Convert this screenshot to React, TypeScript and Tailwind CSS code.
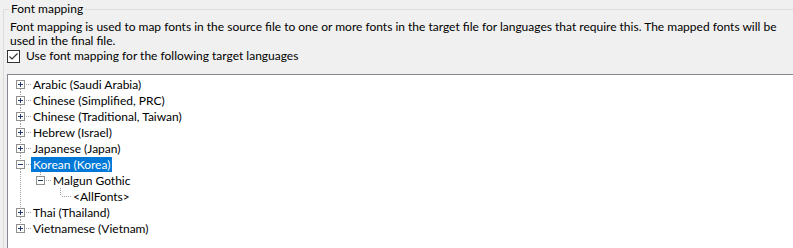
import React from 'react';

type Row = {
  label: string;
  level: number;
  expander?: 'plus' | 'minus';
  selected?: boolean;
  first?: boolean;
  hasNext: boolean; // another sibling follows at same level
  ancestors: boolean[]; // per ancestor level: does that ancestor have a later sibling
};

const rows: Row[] = [
  { label: 'Arabic (Saudi Arabia)', level: 0, expander: 'plus', first: true, hasNext: true, ancestors: [] },
  { label: 'Chinese (Simplified, PRC)', level: 0, expander: 'plus', hasNext: true, ancestors: [] },
  { label: 'Chinese (Traditional, Taiwan)', level: 0, expander: 'plus', hasNext: true, ancestors: [] },
  { label: 'Hebrew (Israel)', level: 0, expander: 'plus', hasNext: true, ancestors: [] },
  { label: 'Japanese (Japan)', level: 0, expander: 'plus', hasNext: true, ancestors: [] },
  { label: 'Korean (Korea)', level: 0, expander: 'minus', selected: true, hasNext: true, ancestors: [] },
  { label: 'Malgun Gothic', level: 1, expander: 'minus', hasNext: false, ancestors: [true] },
  { label: '<AllFonts>', level: 2, hasNext: false, ancestors: [true, false] },
  { label: 'Thai (Thailand)', level: 0, expander: 'plus', hasNext: true, ancestors: [] },
  { label: 'Vietnamese (Vietnam)', level: 0, expander: 'plus', hasNext: false, ancestors: [] },
];

const DOT = '#a0a0a0';

function Connectors({ row }: { row: Row }) {
  const w = 23 + 20 * row.level;
  const cx = 12 + 20 * row.level;
  return (
    <svg width={w} height={16} className="shrink-0" shapeRendering="crispEdges">
      {row.ancestors.map((cont, i) =>
        cont ? (
          <line key={i} x1={12 + 20 * i + 0.5} y1={0} x2={12 + 20 * i + 0.5} y2={16} stroke={DOT} strokeDasharray="1 1" />
        ) : null
      )}
      {/* up to parent */}
      {!row.first && <line x1={cx + 0.5} y1={0} x2={cx + 0.5} y2={8} stroke={DOT} strokeDasharray="1 1" />}
      {/* down to next sibling */}
      {row.hasNext && <line x1={cx + 0.5} y1={9} x2={cx + 0.5} y2={16} stroke={DOT} strokeDasharray="1 1" />}
      <line x1={cx + 2} y1={8.5} x2={cx + 11} y2={8.5} stroke={DOT} strokeDasharray="1 1" />
      {row.expander && (
        <g>
          <rect x={cx - 3.5} y={4.5} width={8} height={8} fill="#ffffff" stroke="#8f8f8f" />
          <line x1={cx - 2} y1={8.5} x2={cx + 3} y2={8.5} stroke="#1f3a6a" />
          {row.expander === 'plus' && <line x1={cx + 0.5} y1={6} x2={cx + 0.5} y2={11} stroke="#1f3a6a" />}
        </g>
      )}
    </svg>
  );
}

export default function App() {
  return (
    <div className="w-[793px] h-[248px] overflow-hidden bg-[#f0f0f0] text-[12px] text-black font-['Lato',sans-serif]">
      <fieldset className="ml-[3px] mt-[1px] w-[840px] h-[300px] border border-[#dcdcdc] p-0 m-0">
        <legend className="ml-[5px] px-[2px] leading-[16px]">Font mapping</legend>
        <p className="ml-[6px] mt-[3px] leading-[14px] w-[775px]">
          Font mapping is used to map fonts in the source file to one or more fonts in the target file for languages that require this. The mapped fonts will be used in the final file.
        </p>
        <label className="ml-[3px] mt-[1px] flex items-center h-[14px] gap-[6px]">
          <span className="w-[13px] h-[13px] border border-[#333333] bg-white flex items-center justify-center">
            <svg width="11" height="11" viewBox="0 0 11 11">
              <path d="M1.5 5.5 L4 8 L9.5 2.5" fill="none" stroke="#333333" strokeWidth="1.2" />
            </svg>
          </span>
          <span>Use font mapping for the following target languages</span>
        </label>
        <div className="ml-[3px] mt-[11px] w-[830px] h-[220px] bg-white border border-[#828790] pt-[1px]">
          {rows.map((row) => (
            <div key={row.label} className="flex items-center h-[16px]">
              <Connectors row={row} />
              <span
                className={
                  row.selected
                    ? 'h-[15px] px-[2px] leading-[15px] bg-[#0078d7] text-white whitespace-nowrap'
                    : 'h-[15px] px-[2px] leading-[15px] whitespace-nowrap'
                }
              >
                {row.label}
              </span>
            </div>
          ))}
        </div>
      </fieldset>
    </div>
  );
}
